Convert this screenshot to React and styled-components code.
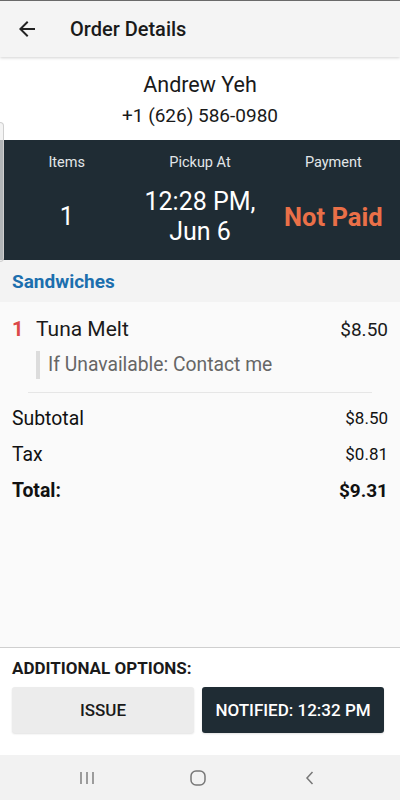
import React from "react";
import styled, { createGlobalStyle } from "styled-components";

const GlobalStyle = createGlobalStyle`
  * { box-sizing: border-box; }
  html, body { margin: 0; padding: 0; }
  body {
    font-family: Roboto, "Noto Sans", "Liberation Sans", sans-serif;
    color: #111;
    background: #fff;
  }
`;

const order = {
  name: "Andrew Yeh",
  phone: "+1 (626) 586-0980",
  items: 1,
  pickup: ["12:28 PM,", "Jun 6"],
  payment: "Not Paid",
  category: "Sandwiches",
  lines: [{ qty: 1, name: "Tuna Melt", price: "$8.50", note: "If Unavailable: Contact me" }],
  subtotal: "$8.50",
  tax: "$0.81",
  total: "$9.31",
  notified: "12:32 PM",
};

const App = () => {
  return (
    <Screen>
      <GlobalStyle />
      <Header>
        <BackButton aria-label="back">
          <svg width="24" height="24" viewBox="0 0 24 24">
            <path
              fill="#222"
              d="M20 11H7.83l5.59-5.59L12 4l-8 8 8 8 1.41-1.41L7.83 13H20v-2z"
            />
          </svg>
        </BackButton>
        <Title>Order Details</Title>
      </Header>

      <Content>
        <Customer>
          <Name>{order.name}</Name>
          <Phone>{order.phone}</Phone>
        </Customer>

        <Summary>
          <Label>Items</Label>
          <Label>Pickup At</Label>
          <Label>Payment</Label>
          <Value>{order.items}</Value>
          <Value>
            {order.pickup[0]}
            <br />
            {order.pickup[1]}
          </Value>
          <Value $alert>{order.payment}</Value>
        </Summary>

        <Category>{order.category}</Category>

        <Items>
          {order.lines.map((line) => (
            <div key={line.name}>
              <ItemRow>
                <Qty>{line.qty}</Qty>
                <ItemName>{line.name}</ItemName>
                <ItemPrice>{line.price}</ItemPrice>
              </ItemRow>
              <Note>{line.note}</Note>
            </div>
          ))}
          <Divider />
          <TotalRow>
            <span>Subtotal</span>
            <Amount>{order.subtotal}</Amount>
          </TotalRow>
          <TotalRow>
            <span>Tax</span>
            <Amount>{order.tax}</Amount>
          </TotalRow>
          <TotalRow $bold>
            <span>Total:</span>
            <Amount $bold>{order.total}</Amount>
          </TotalRow>
        </Items>

        <DrawerHandle />
      </Content>

      <Options>
        <OptionsTitle>ADDITIONAL OPTIONS:</OptionsTitle>
        <ButtonRow>
          <OptionButton>ISSUE</OptionButton>
          <OptionButton $dark>NOTIFIED: {order.notified}</OptionButton>
        </ButtonRow>
      </Options>

      <NavBar>
        <svg width="16" height="16" viewBox="0 0 16 16">
          <g stroke="#777" strokeWidth="1.4">
            <line x1="2" y1="2" x2="2" y2="14" />
            <line x1="8" y1="2" x2="8" y2="14" />
            <line x1="14" y1="2" x2="14" y2="14" />
          </g>
        </svg>
        <svg width="18" height="18" viewBox="0 0 18 18">
          <rect x="2" y="2" width="14" height="14" rx="5" fill="none" stroke="#777" strokeWidth="1.5" />
        </svg>
        <svg width="16" height="16" viewBox="0 0 16 16">
          <path d="M10.5 2 L5 8 L10.5 14" fill="none" stroke="#777" strokeWidth="1.5" />
        </svg>
      </NavBar>
    </Screen>
  );
};

export default App;

const Screen = styled.div`
  width: 400px;
  height: 800px;
  display: flex;
  flex-direction: column;
  overflow: hidden;
  background: #fafafa;
`;

const Header = styled.header`
  height: 57px;
  flex-shrink: 0;
  display: flex;
  align-items: center;
  border-top: 1px solid #6a6a6a;
  background: #f4f4f4;
  box-shadow: 0 1px 3px rgba(0, 0, 0, 0.18);
  position: relative;
  z-index: 2;
`;

const BackButton = styled.div`
  width: 24px;
  height: 24px;
  margin-left: 15px;
  display: flex;
`;

const Title = styled.h1`
  margin: 0 0 0 31px;
  font-size: 20px;
  font-weight: 500;
  color: #1a1a1a;
`;

const Content = styled.main`
  flex: 1;
  display: flex;
  flex-direction: column;
  position: relative;
  background: #fafafa;
`;

const Customer = styled.section`
  background: #fff;
  padding: 14px 0 11px;
  text-align: center;
`;

const Name = styled.div`
  font-size: 21.5px;
  line-height: 28px;
  color: #1a1a1a;
`;

const Phone = styled.div`
  margin-top: 4px;
  font-size: 19px;
  line-height: 26px;
  color: #1a1a1a;
`;

const Summary = styled.section`
  height: 120px;
  background: #1f2c34;
  display: grid;
  grid-template-columns: repeat(3, 1fr);
  grid-template-rows: 20px 60px;
  row-gap: 14px;
  padding-top: 13px;
`;

const Label = styled.div`
  text-align: center;
  font-size: 14.5px;
  line-height: 20px;
  color: #e2e6e8;
`;

const Value = styled.div`
  display: flex;
  align-items: center;
  justify-content: center;
  text-align: center;
  font-size: ${(p) => (p.$alert ? "25.5px" : "25px")};
  line-height: 30px;
  font-weight: ${(p) => (p.$alert ? 700 : 400)};
  color: ${(p) => (p.$alert ? "#ea7048" : "#fff")};
`;

const Category = styled.div`
  height: 42px;
  display: flex;
  align-items: center;
  padding: 0 12px;
  background: #f3f3f3;
  font-size: 19px;
  font-weight: 700;
  color: #1c6fae;
`;

const Items = styled.section`
  padding: 13px 12px 0;
  background: #fafafa;
`;

const ItemRow = styled.div`
  display: flex;
  align-items: center;
  height: 28px;
`;

const Qty = styled.span`
  width: 24px;
  font-size: 20px;
  font-weight: 700;
  color: #db4848;
`;

const ItemName = styled.span`
  flex: 1;
  font-size: 21px;
  color: #1a1a1a;
`;

const ItemPrice = styled.span`
  font-size: 19px;
  color: #1a1a1a;
`;

const Note = styled.div`
  margin: 8px 0 0 24px;
  padding-left: 8px;
  border-left: 4px solid #dcdcdc;
  font-size: 19.3px;
  line-height: 28px;
  color: #666;
`;

const Divider = styled.hr`
  margin: 13px 16px 12px;
  border: none;
  border-top: 1px solid #e6e6e6;
`;

const TotalRow = styled.div`
  display: flex;
  justify-content: space-between;
  align-items: center;
  height: 26px;
  margin-bottom: 10px;
  font-size: 19.4px;
  font-weight: ${(p) => (p.$bold ? 700 : 400)};
  color: #111;
`;

const Amount = styled.span`
  font-size: ${(p) => (p.$bold ? "19px" : "17px")};
`;

const DrawerHandle = styled.div`
  position: absolute;
  left: 0;
  top: 65px;
  width: 4px;
  height: 140px;
  border: 1px solid #cfcfcf;
  border-left: none;
  border-radius: 0 4px 4px 0;
  background: rgba(240, 240, 240, 0.7);
`;

const Options = styled.section`
  flex-shrink: 0;
  background: #fff;
  border-top: 1px solid #cfcfcf;
  box-shadow: 0 -1px 2px rgba(0, 0, 0, 0.08);
  padding: 10px 16px 22px 12px;
`;

const OptionsTitle = styled.div`
  font-size: 17px;
  font-weight: 700;
  line-height: 20px;
  color: #1a1a1a;
`;

const ButtonRow = styled.div`
  display: grid;
  grid-template-columns: 1fr 1fr;
  gap: 8px;
  margin-top: 9px;
`;

const OptionButton = styled.button`
  height: 46px;
  border: none;
  border-radius: 3px;
  font-family: inherit;
  font-size: 17px;
  font-weight: 500;
  background: ${(p) => (p.$dark ? "#1f2c34" : "#ececec")};
  color: ${(p) => (p.$dark ? "#fff" : "#1a1a1a")};
  box-shadow: 0 1px 2px rgba(0, 0, 0, 0.12);
`;

const NavBar = styled.nav`
  height: 45px;
  flex-shrink: 0;
  background: #f2f2f2;
  display: grid;
  grid-template-columns: 1fr 1fr 1fr;
  align-items: center;
  justify-items: center;
  padding: 0 34px 0 31px;
`;
